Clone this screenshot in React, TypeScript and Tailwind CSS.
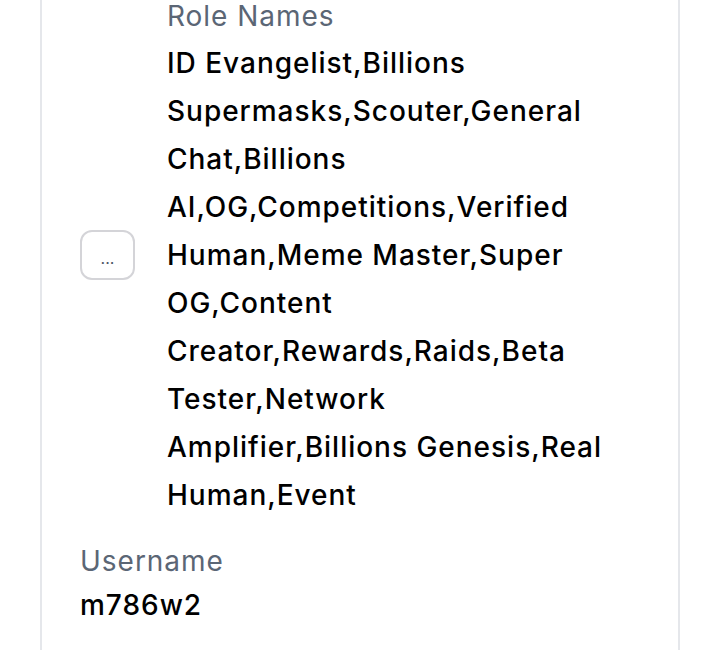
const roles =
  "ID Evangelist,Billions Supermasks,Scouter,General Chat,Billions AI,OG,Competitions,Verified Human,Meme Master,Super OG,Content Creator,Rewards,Raids,Beta Tester,Network Amplifier,Billions Genesis,Real Human,Event";

function App() {
  return (
    <div
      className="h-[650px] overflow-hidden bg-white text-black"
      style={{ fontFamily: "Inter, 'Open Sans', sans-serif" }}
    >
      <div className="mx-10 -mt-[1px] min-h-[700px] border-x-2 border-[#e5e7eb] pl-[38px] pr-[38px]">
        {/* role names row */}
        <div className="flex items-center gap-8">
          <button className="mb-2 flex h-[50px] w-[55px] shrink-0 items-center justify-center rounded-xl border-2 border-[#d4d4d8] bg-white pt-1.5 text-base leading-none text-[#4b5563]">
            ...
          </button>
          <div className="max-w-[450px] min-w-0 flex-1">
            <div className="mb-1.5 text-[28px] leading-[34px] tracking-[0.035em] text-[#5b6675]">Role Names</div>
            <div className="text-[28px] font-medium leading-[48px] tracking-[0.035em]">{roles}</div>
          </div>
        </div>

        {/* username */}
        <div className="mt-[22px]">
          <div className="text-[28px] leading-10 tracking-[0.035em] text-[#5b6675]">Username</div>
          <div className="text-[28px] font-medium leading-[48px] tracking-[0.035em]">m786w2</div>
        </div>
      </div>
    </div>
  );
}

export default App;
